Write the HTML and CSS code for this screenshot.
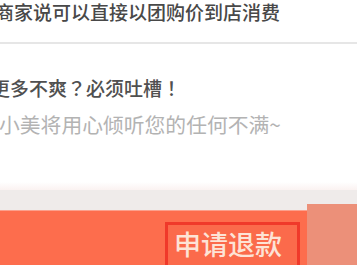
FILE: index.html
```html
<!DOCTYPE html>
<html lang="zh-CN">
<head>
<meta charset="utf-8">
<link rel="stylesheet" href="styles.css">
</head>
<body>
<div class="page">
  <div class="top">
    <div class="line1">商家说可以直接以团购价到店消费</div>
  </div>
  <div class="divider"></div>
  <div class="feedback">
    <div class="title" lang="zh-TW">更多不爽？必须吐槽！</div>
    <div class="hint">小美将用心倾听您的任何不满~</div>
  </div>
  <div class="shade"></div>
  <div class="footer">
    <div class="btn">
      <div class="refund">申请退款</div>
    </div>
    <div class="side"></div>
  </div>
</div>
</body>
</html>
```
FILE: styles.css
```css
html, body {
  margin: 0;
  padding: 0;
  background: #ffffff;
}
.page {
  width: 357px;
  height: 265px;
  overflow: hidden;
  display: flex;
  flex-direction: column;
  font-family: "Noto Sans CJK SC", "Noto Sans", sans-serif;
}
.top {
  height: 42px;
  flex-shrink: 0;
  display: flex;
  flex-direction: column;
}
.line1 {
  font-size: 19px;
  line-height: 24px;
  font-weight: 500;
  color: #484848;
  margin-left: -5px;
  white-space: nowrap;
}
.divider {
  height: 2px;
  background: #e6e6e6;
  flex-shrink: 0;
}
.feedback {
  height: 138px;
  flex-shrink: 0;
  display: flex;
  flex-direction: column;
  padding-top: 32px;
  box-sizing: border-box;
}
.title {
  font-family: "Noto Sans CJK TC", "Noto Sans CJK SC", sans-serif;
  font-size: 19px;
  line-height: 24px;
  font-weight: 500;
  color: #505050;
  margin-left: -9px;
  white-space: nowrap;
}
.hint {
  font-size: 20.8px;
  line-height: 26px;
  color: #b3b3b3;
  margin-top: 11px;
  margin-left: -1px;
  white-space: nowrap;
}
.shade {
  height: 8px;
  flex-shrink: 0;
  background: linear-gradient(#ffffff, #fbf2f1);
}
.footer {
  flex: 1;
  min-height: 0;
  overflow: hidden;
  display: flex;
  background: #efebea;
}
.btn {
  width: 307px;
  margin-top: 20px;
  background: #fd6d4d;
  border-top: 1px solid #fca08c;
  display: flex;
  justify-content: flex-end;
  align-items: flex-start;
  padding-right: 7px;
  padding-top: 11px;
  box-sizing: border-box;
}
.refund {
  width: 135px;
  height: 46px;
  flex-shrink: 0;
  box-sizing: border-box;
  border: 3px solid #f0392a;
  border-bottom: none;
  background: #fb6a4b;
  color: #fde3d6;
  font-size: 27px;
  font-weight: 500;
  line-height: 38px;
  padding-left: 6px;
  white-space: nowrap;
}
.side {
  flex: 1;
  margin-top: 14px;
  background: #ec9079;
}
```
